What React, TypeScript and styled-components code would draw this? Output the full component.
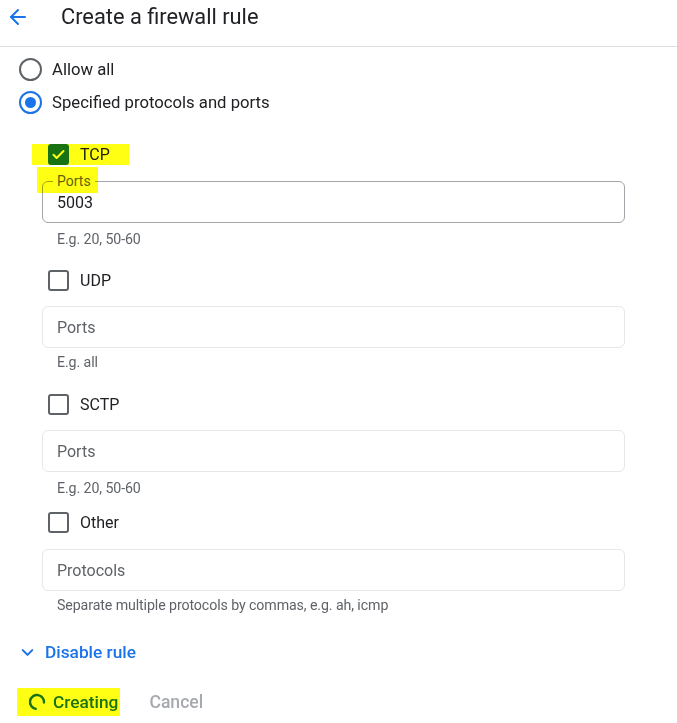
import React from "react";
import styled, { createGlobalStyle } from "styled-components";
import { ArrowLeft, ChevronDown } from "lucide-react";

const Global = createGlobalStyle`
  html, body { margin: 0; padding: 0; background: #ffffff; }
  body { font-family: Roboto, "Noto Sans", Arial, sans-serif; color: #202124; }
  * { box-sizing: border-box; }
`;

const Page = styled.div`
  width: 677px;
  height: 723px;
  overflow: hidden;
  background: #fff;
`;

const Header = styled.header`
  height: 47px;
  border-bottom: 1px solid #dadce0;
  display: flex;
  align-items: flex-start;
  padding: 5px 0 0 6px;
`;

const BackButton = styled.button`
  border: 0;
  background: none;
  padding: 0;
  width: 24px;
  height: 24px;
  display: flex;
  align-items: center;
  justify-content: center;
  color: #1a73e8;
  cursor: pointer;
`;

const Title = styled.h1`
  margin: 0 0 0 31px;
  font-size: 21.8px;
  font-weight: 400;
  line-height: 24px;
  color: #202124;
`;

const Body = styled.div`
  padding: 6px 0 0 0;
`;

const RadioRow = styled.label`
  display: flex;
  align-items: center;
  height: 33px;
  padding-left: 19px;
  gap: 10px;
  font-size: 16.7px;
  color: #202124;
`;

const RadioCircle = styled.span<{ $on?: boolean }>`
  width: 23px;
  height: 23px;
  border-radius: 50%;
  border: 2px solid ${(p) => (p.$on ? "#1a73e8" : "#5f6368")};
  display: flex;
  align-items: center;
  justify-content: center;
  &::after {
    content: "";
    width: 11px;
    height: 11px;
    border-radius: 50%;
    background: ${(p) => (p.$on ? "#1a73e8" : "transparent")};
  }
`;

const Protocols = styled.div`
  padding-left: 42px;
  width: 625px;
`;

const CheckRow = styled.div<{ $mt: number }>`
  display: flex;
  align-items: center;
  margin-top: ${(p) => p.$mt}px;
  padding-left: 6px;
  height: 22px;
`;

const CheckLabel = styled.label`
  position: relative;
  display: inline-flex;
  align-items: center;
  gap: 11px;
  font-size: 16px;
  color: #202124;
`;

const Box = styled.span<{ $on?: boolean }>`
  width: 21px;
  height: 21px;
  border-radius: 3px;
  border: 2px solid ${(p) => (p.$on ? "#1a73e8" : "#5f6368")};
  background: ${(p) => (p.$on ? "#1a73e8" : "#fff")};
  display: flex;
  align-items: center;
  justify-content: center;
`;

const Marker = styled.span<{ $l: number; $r: number; $t: number; $b: number }>`
  position: absolute;
  left: ${(p) => p.$l}px;
  right: ${(p) => p.$r}px;
  top: ${(p) => p.$t}px;
  bottom: ${(p) => p.$b}px;
  background: #ffff14;
  mix-blend-mode: multiply;
  pointer-events: none;
`;

const Field = styled.div<{ $mt: number; $active?: boolean }>`
  position: relative;
  margin-top: ${(p) => p.$mt}px;
  height: 42px;
  border: 1px solid ${(p) => (p.$active ? "#a2a5a9" : "#e6e7e9")};
  border-radius: 6px;
  display: flex;
  align-items: center;
  padding: 0 14px;
  font-size: 16px;
`;

const Value = styled.span`
  color: #202124;
`;

const Placeholder = styled.span`
  color: #5f6368;
`;

const FloatLabel = styled.span`
  position: absolute;
  left: 10px;
  top: -10px;
  padding: 0 4px;
  background: #fff;
  font-size: 14px;
  line-height: 18px;
  color: #5f6368;
`;

const Helper = styled.div<{ $mt: number }>`
  margin-top: ${(p) => p.$mt}px;
  padding-left: 15px;
  font-size: 14.2px;
  line-height: 16px;
  color: #5f6368;
  letter-spacing: -0.1px;
`;

const Toggle = styled.button`
  margin: 29px 0 0 18px;
  border: 0;
  background: none;
  padding: 0;
  display: flex;
  align-items: center;
  gap: 8px;
  font-family: inherit;
  font-size: 17.3px;
  font-weight: 500;
  color: #1a73e8;
  cursor: pointer;
`;

const Actions = styled.div`
  margin: 30px 0 0 28px;
  display: flex;
  align-items: center;
  gap: 31px;
`;

const Primary = styled.span`
  position: relative;
  display: inline-flex;
  align-items: center;
  gap: 7px;
  font-size: 17.3px;
  font-weight: 500;
  color: #1a73e8;
`;

const Secondary = styled.span`
  font-size: 17.6px;
  font-weight: 500;
  color: #a6a9ad;
`;

function Check() {
  return (
    <svg width="15" height="15" viewBox="0 0 24 24" fill="none">
      <path d="M4 12.5l5 5L20 6.5" stroke="#fff" strokeWidth="3.2" strokeLinecap="round" strokeLinejoin="round" />
    </svg>
  );
}

function Spinner() {
  return (
    <svg width="18" height="18" viewBox="0 0 18 18">
      <circle
        cx="9"
        cy="9"
        r="7"
        fill="none"
        stroke="#1a73e8"
        strokeWidth="2.4"
        strokeLinecap="round"
        strokeDasharray="32 12"
        transform="rotate(100 9 9)"
      />
    </svg>
  );
}

type Proto = {
  name: string;
  checked?: boolean;
  placeholder: string;
  value?: string;
  helper: string;
  rowMt: number;
  fieldMt: number;
  helperMt: number;
};

const protos: Proto[] = [
  { name: "TCP", checked: true, placeholder: "Ports", value: "5003", helper: "E.g. 20, 50-60", rowMt: 24, fieldMt: 16, helperMt: 8 },
  { name: "UDP", placeholder: "Ports", helper: "E.g. all", rowMt: 22, fieldMt: 15, helperMt: 6 },
  { name: "SCTP", placeholder: "Ports", helper: "E.g. 20, 50-60", rowMt: 23, fieldMt: 15, helperMt: 8 },
  { name: "Other", placeholder: "Protocols", helper: "Separate multiple protocols by commas, e.g. ah, icmp", rowMt: 15, fieldMt: 16, helperMt: 6 },
];

export default function App() {
  return (
    <Page>
      <Global />
      <Header>
        <BackButton aria-label="Back">
          <ArrowLeft size={24} strokeWidth={2} />
        </BackButton>
        <Title>Create a firewall rule</Title>
      </Header>
      <Body>
        <RadioRow>
          <RadioCircle />
          Allow all
        </RadioRow>
        <RadioRow>
          <RadioCircle $on />
          Specified protocols and ports
        </RadioRow>
        <Protocols>
          {protos.map((p) => (
            <React.Fragment key={p.name}>
              <CheckRow $mt={p.rowMt}>
                <CheckLabel>
                  <Box $on={p.checked}>{p.checked && <Check />}</Box>
                  {p.name}
                  {p.checked && <Marker $l={-16} $r={-19} $t={0} $b={0} />}
                </CheckLabel>
              </CheckRow>
              <Field $mt={p.fieldMt} $active={!!p.value}>
                {p.value ? (
                  <>
                    <FloatLabel>
                      Ports
                      <Marker $l={-16} $r={-3} $t={-5} $b={-3} />
                    </FloatLabel>
                    <Value>{p.value}</Value>
                  </>
                ) : (
                  <Placeholder>{p.placeholder}</Placeholder>
                )}
              </Field>
              <Helper $mt={p.helperMt}>{p.helper}</Helper>
            </React.Fragment>
          ))}
        </Protocols>
        <Toggle>
          <ChevronDown size={19} strokeWidth={2.6} />
          Disable rule
        </Toggle>
        <Actions>
          <Primary>
            <Spinner />
            Creating
            <Marker $l={-11} $r={-2} $t={-4} $b={-4} />
          </Primary>
          <Secondary>Cancel</Secondary>
        </Actions>
      </Body>
    </Page>
  );
}
